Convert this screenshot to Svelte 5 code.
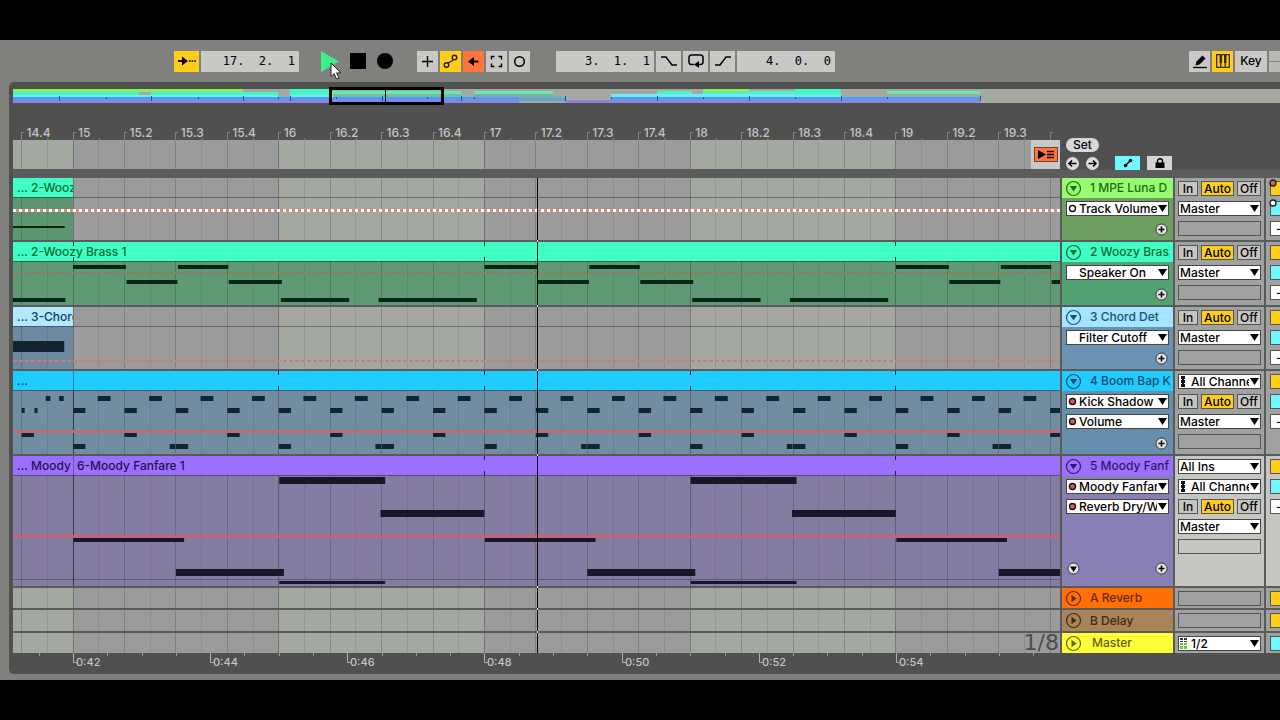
<script>
  const BEAT = 51.43;
  const ORIGIN = 60; // x of bar 15 inside a lane

  const at = (beat) => ORIGIN + beat * BEAT;

  const beats = Array.from({ length: 40 }, (_, i) => i - 1);
  const bars = Array.from({ length: 6 }, (_, i) => i * 2 - 1);

  function barLabel(beat) {
    const bar = 15 + Math.floor(beat / 4);
    const sub = (((beat % 4) + 4) % 4) + 1;
    return sub === 1 ? `${bar}` : `${bar}.${sub}`;
  }

  // [start, end, y, height], start and end in beats from bar 15
  function loop(pattern, length, from, to) {
    const out = [];
    for (let k = from; k < to; k++) {
      for (const [a, b, y, h] of pattern) out.push([a + k * length, b + k * length, y, h]);
    }
    return out;
  }

  const brass = loop(
    [
      [0, 1.03, 23, 4],
      [1.04, 2.03, 38, 4],
      [2.04, 3.02, 23, 4],
      [3.03, 4.06, 38, 4],
      [4.04, 5.37, 56, 4],
      [5.94, 7.85, 56, 4],
    ],
    8, -1, 4
  );

  const drums = [
    [-0.53, -0.44, 25, 5],
    [-0.27, -0.18, 25, 5],
    [-1, -0.94, 37, 5],
    [-0.75, -0.69, 37, 5],
    [-1, -0.76, 62, 4],
    ...loop([[0.48, 0.73, 25, 5], [0, 0.24, 37, 5]], 1, 0, 30),
    ...loop([[1, 1.24, 62, 4]], 2, 0, 15),
    ...loop([[0, 0.24, 73, 5], [1.88, 1.99, 73, 5], [2, 2.24, 73, 5]], 4, 0, 8),
  ];

  const fanfare = loop(
    [
      [0.01, 2.16, 82, 4],
      [2, 4.1, 113, 7],
      [4.01, 6.07, 21, 7],
      [4.01, 6.07, 125, 3],
      [5.98, 8, 54, 7],
    ],
    8, 0, 4
  );

  const tracks = [
    {
      id: "luna", num: 1, name: "MPE Luna D", height: 62,
      head: "#97fd70", body: "#6d9f60", ink: "#1d6a18",
      params: [{ name: "Track Volume", dot: "open" }],
      clips: [{ from: -2, to: 0, title: "... 2-Woozy Brass 1", head: "#40ffc5", body: "#5c9771", ink: "#0c6b35" }],
      notes: [[-2, -0.16, 48, 2]],
      line: { y: 32.5, width: 3, color: "#df8880", dots: true },
      marks: [], inputs: [],
    },
    {
      id: "woozy", num: 2, name: "Woozy Bras", height: 63,
      head: "#40ffc5", body: "#53a273", ink: "#0c6b35",
      params: [{ name: "Speaker On", dot: "" }],
      clips: [{ from: -2, to: 24, title: "... 2-Woozy Brass 1", head: "#40ffc5", body: "#5f9a74", ink: "#0c6b35" }],
      notes: brass,
      line: { y: 31, width: 2, color: "#96785f", dash: "4 2" },
      marks: [0, 8, 16], inputs: [],
    },
    {
      id: "chord", num: 3, name: "Chord Det", height: 62,
      head: "#a4e5ff", body: "#6b91b3", ink: "#16527f",
      params: [{ name: "Filter Cutoff", dot: "" }],
      clips: [{ from: -2, to: 0, title: "... 3-Chord Detune", head: "#b2e9ff", body: "#7089a3", ink: "#103e66" }],
      notes: [[-2, -0.17, 34, 11]],
      line: { y: 54, width: 2, color: "#cc7b77", dash: "4 2" },
      marks: [], inputs: [],
    },
    {
      id: "boom", num: 4, name: "Boom Bap K", height: 83,
      head: "#20ccff", body: "#668fae", ink: "#0d4d75",
      params: [{ name: "Kick Shadow", dot: "on" }, { name: "Volume", dot: "on" }],
      clips: [
        { from: -2, to: 0, title: "...", head: "#20ccff", body: "#718da2", ink: "#0d4d75" },
        { from: 0, to: 24, title: "", head: "#20ccff", body: "#718da2", ink: "#0d4d75" },
      ],
      notes: drums,
      line: { y: 60.5, width: 3, color: "#bb6c77" },
      marks: [4, 8, 12, 16], inputs: ["channels"],
    },
    {
      id: "moody", num: 5, name: "Moody Fanf", height: 130,
      head: "#9b70ff", body: "#8a7fb5", ink: "#351768",
      params: [{ name: "Moody Fanfare", dot: "on" }, { name: "Reverb Dry/Wet", dot: "on" }],
      clips: [
        { from: -2, to: 0, title: "... Moody", head: "#9b70ff", body: "#857ca2", ink: "#22104e" },
        { from: 0, to: 24, title: "6-Moody Fanfare 1", head: "#9b70ff", body: "#857ca2", ink: "#22104e" },
      ],
      notes: fanfare,
      line: { y: 80.5, width: 3, color: "#c46478" },
      marks: [8, 16], inputs: ["ins", "channels"], tall: true,
    },
  ];

  const returns = [
    { name: "A Reverb", height: 20, head: "#ff7108", ink: "#6e2605" },
    { name: "B Delay", height: 21, head: "#a98359", ink: "#45280d" },
    { name: "Master", height: 20, head: "#ffff3a", ink: "#62620c", master: true },
  ];

  const Y = "#8aee58", M = "#46f7c0", C = "#78e6fb", B = "#4b9df5", P = "#8f83df";
  // [x1, x2, y, height, colour]
  const overview = [
    [0, 230, 0, 3, Y], [0, 126, 3, 3, M], [138, 265, 3, 3, M], [0, 265, 6, 3, C],
    [0, 506, 8, 3, B], [0, 506, 11, 3, P],
    [277, 320, 0, 7, M], [277, 320, 6, 2, C], [320, 448, 2, 3, "#63eab0"], [320, 448, 5, 3, "#7db9a4"],
    [461, 540, 2, 3, "#63eab0"], [461, 540, 5, 3, "#84aaa5"],
    [506, 552, 8, 4, "#62a6cc"], [552, 598, 11, 3, P],
    [598, 967, 8, 3, B], [598, 967, 11, 3, P], [598, 828, 5, 3, C],
    [644, 679, 2, 3, M], [690, 736, 2, 3, M], [690, 736, 0, 3, Y], [736, 782, 2, 3, M],
    [782, 828, 0, 6, M], [874, 967, 2, 3, "#63eab0"],
  ];
  const overviewTicks = [46, 93, 138, 185, 230, 265, 277, 323, 369, 414, 448, 461, 552, 598, 644, 690, 736, 782, 828, 874, 967];
</script>

{#snippet grid()}
  <rect width="100%" height="100%" fill="#9b9b9b" />
  {#each bars as bar}
    <rect x={at(bar * 4)} width={BEAT * 4} height="100%" fill="#a3a8a1" />
  {/each}
{/snippet}

{#snippet lines()}
  {#each beats as beat}
    <rect x={Math.round(at(beat) - 0.4)} width="1" height="100%" fill="#000" opacity={beat % 4 === 0 ? 0.26 : 0.18} />
    <rect x={Math.round(at(beat + 0.5) - 0.4)} width="1" height="100%" fill="#000" opacity="0.09" />
  {/each}
{/snippet}

{#snippet fold(open)}
  <svg class="fold" width="17" height="17" viewBox="0 0 17 17">
    <circle cx="8.5" cy="8.5" r="7" fill="none" stroke="currentColor" stroke-width="1.2" />
    {#if open}
      <path d="M4.8 6h7.4L8.5 11.5z" fill="currentColor" />
    {:else}
      <path d="M6.5 4.8v7.4L11.5 8.5z" fill="currentColor" />
    {/if}
  </svg>
{/snippet}

{#snippet picker(label, value, icon)}
  <label class="picker">
    {#if icon === "open" || icon === "on"}
      <svg class="lead" width="9" height="15" viewBox="0 0 9 15">
        <circle cx="4.5" cy="7.5" r="3" fill={icon === "on" ? "#e2595b" : "#fff"} stroke="#111" stroke-width="1.4" />
      </svg>
    {:else if icon === "midi"}
      <svg class="lead" width="6" height="15" viewBox="0 0 6 15">
        <path d="M1 2h4v3H1zM1 6h4v3H1zM1 10h4v3H1zM2 2h2v10H2z" fill="#111" />
      </svg>
    {:else if icon === "audio"}
      <svg class="lead" width="8" height="15" viewBox="0 0 8 15">
        <path d="M0 2h3v2H0zM4 2h3v2H4zM0 5h3v1H0zM4 5h3v1H4z" fill="#333" />
        <path d="M0 7h3v2H0zM4 7h3v2H4zM0 10h3v3H0zM4 10h3v3H4z" fill="#63cf3c" />
      </svg>
    {/if}
    <select class:indent={icon !== undefined} aria-label={label}>
      <option>{value}</option>
    </select>
    <svg class="caret" width="11" height="11" viewBox="0 0 11 11">
      <path d="M1 2h9L5.5 9z" fill="#000" />
    </svg>
  </label>
{/snippet}

{#snippet plus()}
  <button class="round" aria-label="Add automation lane">
    <svg width="13" height="13" viewBox="0 0 13 13">
      <circle cx="6.5" cy="6.5" r="5.5" fill="#e4e4e4" stroke="#333" />
      <path d="M6.5 3.5v6M3.5 6.5h6" stroke="#000" stroke-width="1.6" />
    </svg>
  </button>
{/snippet}

<main class="app">
  <header class="toolbar">
    <div class="group">
      <button class="tool on wide" aria-label="Follow">
        <svg width="19" height="12" viewBox="0 0 19 12">
          <path d="M1 6h6" stroke="#000" stroke-width="1.8" />
          <path d="M5 1.5L11 6l-6 4.5z" />
          <path d="M12 6h7" stroke="#000" stroke-width="1.6" stroke-dasharray="1.6 1" />
        </svg>
      </button>
      <input class="field" aria-label="Song position" value="17.  2.  1" />
    </div>

    <div class="transport">
      <button class="play" aria-label="Play">
        <svg width="18" height="21" viewBox="0 0 18 21"><path d="M0 0v21L18 10.5z" fill="#3fee8c" /></svg>
        <svg class="cursor" width="12" height="18" viewBox="0 0 12 18">
          <path d="M1 1v13.500l3.200-2.800L6.500 17l2.400-1-2.300-5.100H11z" fill="#fff" stroke="#222" />
        </svg>
      </button>
      <button aria-label="Stop"><svg width="16" height="16"><rect width="16" height="16" /></svg></button>
      <button aria-label="Record"><svg width="16" height="16"><circle cx="8" cy="8" r="8" /></svg></button>
    </div>

    <div class="group modes">
      <button class="tool" aria-label="Overdub">
        <svg width="13" height="13" viewBox="0 0 13 13"><path d="M6.5 1v11M1 6.5h11" stroke="#000" stroke-width="1.4" /></svg>
      </button>
      <button class="tool on" aria-label="Automation arm">
        <svg width="15" height="15" viewBox="0 0 15 15" fill="none" stroke="#2a2000" stroke-width="1.4">
          <circle cx="3.5" cy="11" r="2.3" /><circle cx="11.500" cy="3.5" r="2.3" />
          <path d="M5 9.300C6.500 6.500 9 9.500 10 5.200" />
        </svg>
      </button>
      <button class="tool hot" aria-label="Re-enable automation">
        <svg width="11" height="11" viewBox="0 0 11 11"><path d="M0 5.500L6 1v3.500h4.500v2H6V10z" /></svg>
      </button>
      <button class="tool" aria-label="Capture">
        <svg width="13" height="13" viewBox="0 0 13 13" fill="none" stroke="#000" stroke-width="1.4">
          <path d="M1.500 4.500v-3h3M8.500 1.500h3v3M11.500 8.500v3h-3M4.500 11.500h-3v-3" />
        </svg>
      </button>
      <button class="tool" aria-label="Session record">
        <svg width="13" height="13" viewBox="0 0 13 13"><circle cx="6.5" cy="6.5" r="4.8" fill="none" stroke="#000" stroke-width="1.5" /></svg>
      </button>
    </div>

    <div class="group loop">
      <input class="field" aria-label="Loop start" value="3.  1.  1" />
      <button class="tool wide" aria-label="Punch in">
        <svg width="16" height="12" viewBox="0 0 16 12" fill="none" stroke="#000" stroke-width="1.5"><path d="M0 2h5l6 8h5" /></svg>
      </button>
      <button class="tool wide" aria-label="Loop">
        <svg width="18" height="16" viewBox="0 0 18 16">
          <path d="M7 11.500H4.500A2.500 2.500 0 0 1 2 9V4.500A2.500 2.500 0 0 1 4.500 2h9A2.500 2.500 0 0 1 16 4.500V9a2.500 2.500 0 0 1-2.500 2.500H12" fill="none" stroke="#000" stroke-width="1.5" />
          <path d="M12 8v7l-5-3.500z" />
        </svg>
      </button>
      <button class="tool wide" aria-label="Punch out">
        <svg width="16" height="12" viewBox="0 0 16 12" fill="none" stroke="#000" stroke-width="1.5"><path d="M0 10h5l6-8h5" /></svg>
      </button>
      <input class="field" aria-label="Loop length" value="4.  0.  0" />
    </div>

    <div class="group right">
      <button class="tool" aria-label="Draw mode">
        <svg width="14" height="15" viewBox="0 0 14 15">
          <path d="M2.500 11.500L3.500 7.500 9.500 1.500l3 3-6 6z" /><path d="M0 13.500h14" stroke="#000" stroke-width="1.3" />
        </svg>
      </button>
      <button class="tool on" aria-label="Computer MIDI keyboard">
        <svg width="14" height="14" viewBox="0 0 14 14">
          <path d="M.7.700h12.600v12.600H.7zM4.800 8v5M9.200 8v5" fill="none" stroke="#3a2a00" stroke-width="1.3" />
          <path d="M3.600 1h2.500v8H3.600zM8 1h2.500v8H8z" fill="#3a2a00" />
        </svg>
      </button>
      <button class="tool key">Key</button>
      <span class="stack"><i></i><i></i></span>
    </div>
  </header>

  <section class="panel">
    <div class="overview">
      <svg width="100%" height="14">
        {#each overview as [x1, x2, y, h, fill]}
          <rect x={x1} {y} width={x2 - x1} height={h} {fill} />
        {/each}
        {#each overviewTicks as x, i}
          <rect {x} y={i % 2 ? 8 : 7} width="1" height={i % 2 ? 2 : 5} fill="#1c4fa0" />
        {/each}
      </svg>
      <div class="window"></div>
    </div>

    <div class="row top">
      <div class="rulers">
        <svg class="ruler" width="100%" height="37">
          {#each beats as beat}
            <path d="M{Math.round(at(beat) - 0.4) + 3} 29.500h-2.500v7.500" fill="none" stroke="#858585" />
            <rect x={at(beat + 0.5)} y="35" width="1" height="2" fill="#858585" />
            {#if beat < 19}
              <text x={at(beat) + 5} y="34">{barLabel(beat)}</text>
            {/if}
          {/each}
        </svg>
        <div class="scrub">
          <svg width="100%" height="29">{@render grid()}{@render lines()}</svg>
          <div class="arranger">
            <button aria-label="Back to arrangement">
              <svg width="18" height="11" viewBox="0 0 18 11">
                <path d="M1 1l8 4.500L1 10z" /><path d="M10 2.500h7M10 5.500h7M10 8.500h7" stroke="#000" stroke-width="1.3" />
              </svg>
            </button>
          </div>
        </div>
      </div>

      <div class="locators">
        <button class="set">Set</button>
        <div class="locator-row">
          <button class="round" aria-label="Previous locator">
            <svg width="13" height="13" viewBox="0 0 13 13"><circle cx="6.5" cy="6.5" r="6.5" fill="#dcdcdc" /><path d="M10.500 6.500H4M6 3.500l-3 3 3 3" fill="none" stroke="#000" stroke-width="1.6" /></svg>
          </button>
          <button class="round" aria-label="Next locator">
            <svg width="13" height="13" viewBox="0 0 13 13"><circle cx="6.5" cy="6.5" r="6.5" fill="#dcdcdc" /><path d="M2.500 6.500H9M7 3.500l3 3-3 3" fill="none" stroke="#000" stroke-width="1.6" /></svg>
          </button>
          <button class="flat cyan" aria-label="Automation mode">
            <svg width="10" height="10" viewBox="0 0 10 10"><path d="M2 8l6-6" stroke="#000" stroke-width="1.4" /><circle cx="2.500" cy="7.500" r="1.800" /><circle cx="7.500" cy="2.500" r="1.800" /></svg>
          </button>
          <button class="flat" aria-label="Lock envelopes">
            <svg width="10" height="10" viewBox="0 0 10 10"><path d="M.5 4.500h9V10h-9z" /><path d="M2.500 5V3a2.500 2.200 0 0 1 5 0v2" fill="none" stroke="#000" stroke-width="1.4" /></svg>
          </button>
        </div>
      </div>
    </div>

    <div class="tracks">
      {#each tracks as track (track.id)}
        <div class="row" style="height: {track.height}px">
          <div class="lane">
            <svg class="canvas" width="100%" height="100%">
              {@render grid()}
              {#each track.clips as clip}
                <rect x={at(clip.from)} y="0" width={(clip.to - clip.from) * BEAT} height="100%" fill={clip.body} />
              {/each}
              {@render lines()}
              {#each track.clips as clip}
                <rect x={at(clip.from)} width={(clip.to - clip.from) * BEAT} height="19" fill={clip.head} />
                {#if track.clips.length > 1}
                  <rect x={ORIGIN} width="1" height="100%" fill="#222" opacity="0.4" />
                {/if}
              {/each}
              <rect y="19" width="100%" height="1" fill="#000" opacity="0.35" />
              {#if track.tall}
                <rect y="123" width="100%" height="1" fill="#000" opacity="0.25" />
              {/if}
              {#each track.marks as beat}
                <rect x={Math.round(at(beat) - 0.4)} width="1" height="4" fill="#0a3030" />
                <rect x={Math.round(at(beat) - 0.4)} y="15" width="1" height="4" fill="#0a3030" />
              {/each}
              {#each track.notes as [a, b, y, h]}
                <rect x={at(a)} {y} width={(b - a) * BEAT} height={h} class="note {track.id}" />
              {/each}
              <line x1="0" x2="100%" y1={track.line.y} y2={track.line.y} stroke={track.line.color} stroke-width={track.line.width} stroke-dasharray={track.line.dash} />
              {#if track.line.dots}
                <line x1="0" x2="100%" y1={track.line.y} y2={track.line.y} stroke="#fff" stroke-width="3" stroke-dasharray="3 3" />
              {/if}
            </svg>
            {#each track.clips as clip}
              <span
                class="clip-title"
                style="left: {Math.max(0, at(clip.from))}px; width: {at(clip.to) - Math.max(0, at(clip.from))}px; color: {clip.ink}"
              >{clip.title}</span>
            {/each}
          </div>

          <div class="track-head" style="background: {track.body}">
            <div class="track-title" style="background: {track.head}; color: {track.ink}">
              {@render fold(true)}
              <span>{track.num} {track.name}</span>
            </div>
            {#each track.params as param}
              {@render picker("Automation parameter", param.name, param.dot)}
            {/each}
            <div class="track-foot" class:tall={track.tall}>
              {#if track.tall}
                <button class="round" aria-label="Show lanes">
                  <svg width="13" height="13" viewBox="0 0 13 13">
                    <circle cx="6.5" cy="6.5" r="5.5" fill="#e4e4e4" stroke="#333" /><path d="M3 4.500h7L6.500 10z" />
                  </svg>
                </button>
              {/if}
              {@render plus()}
            </div>
          </div>

          <div class="io" class:tall={track.tall}>
            {#if track.inputs.includes("ins")}
              {@render picker("MIDI from", "All Ins")}
            {/if}
            {#if track.inputs.includes("channels")}
              {@render picker("Input channel", "All Channels", "midi")}
            {/if}
            <div class="monitor">
              <button>In</button>
              <button class="active">Auto</button>
              <button>Off</button>
            </div>
            {@render picker("Output", "Master")}
            <div class="slot"></div>
          </div>

          <div class="mix" class:tall={track.tall}>
            <i class="yellow"></i>
            <i class="cyan"></i>
            <i class="white">-</i>
            {#if track.id === "luna"}
              <svg class="knobs" width="8" height="30" viewBox="0 0 8 30">
                <circle cx="4" cy="5" r="3" fill="#e2595b" stroke="#222" stroke-width="1.4" />
                <circle cx="4" cy="25" r="3" fill="#fff" stroke="#222" stroke-width="1.4" />
              </svg>
            {/if}
          </div>
        </div>
      {/each}

      {#each returns as ret}
        <div class="row" style="height: {ret.height}px">
          <div class="lane">
            <svg class="canvas" width="100%" height="100%">{@render grid()}{@render lines()}</svg>
            {#if ret.master}
              <span class="grid-size">1/8</span>
            {/if}
          </div>
          <div class="track-head">
            <div class="track-title" style="background: {ret.head}; color: {ret.ink}">
              {@render fold(false)}
              <span class:master={ret.master}>{ret.name}</span>
            </div>
          </div>
          <div class="io">
            {#if ret.master}
              {@render picker("Master output", "1/2", "audio")}
            {:else}
              <div class="slot"></div>
            {/if}
          </div>
          <div class="mix"><i class={ret.master ? "cyan" : "yellow"}></i></div>
        </div>
      {/each}

      <svg class="playhead" width="1" height="475">
        <rect width="1" height="475" />
        {#each [62, 127, 191, 276, 408, 430, 453] as y}
          <rect {y} width="1" height="2" fill="#fff" />
        {/each}
      </svg>
    </div>

    <svg class="times" width="100%" height="21">
      {#each Array.from({ length: 30 }, (_, i) => i - 1) as i}
        {@const x = Math.round(ORIGIN + i * 34.29)}
        {#if i % 4 === 0 && i < 28}
          <path d="M{x + 0.5} 0v9.500h3" fill="none" stroke="#b0b0b0" />
          <text x={x + 3} y="13">0:{42 + i / 2}</text>
        {:else}
          <rect {x} width="1" height="3" fill="#a0a0a0" />
        {/if}
      {/each}
    </svg>
  </section>
</main>

<style>
  :global(body) {
    margin: 0;
    background: #000;
  }

  .app {
    margin: 40px 0;
    padding-bottom: 6px;
    background: #80817c;
    font-family: Inter, "Liberation Sans", sans-serif;
    font-size: 12px;
    font-weight: 500;
    line-height: 14px;
    overflow: hidden;
  }

  svg {
    display: block;
    flex-shrink: 0;
  }

  button,
  input,
  select {
    box-sizing: border-box;
    margin: 0;
    border: 0;
    border-radius: 0;
    padding: 0;
    font: inherit;
    color: #000;
  }

  /* Toolbar */
  .toolbar {
    display: flex;
    align-items: center;
    height: 42px;
    padding-left: 174px;
    position: relative;
  }

  .group {
    display: flex;
    gap: 2px;
  }

  .tool {
    display: flex;
    align-items: center;
    justify-content: center;
    width: 21px;
    height: 21px;
    background: #c8c8c4;
  }

  .tool.wide {
    width: 25px;
  }

  .tool.on {
    background: #ffcd1a;
  }

  .tool.hot {
    background: #ff7438;
  }

  .tool.key {
    width: 32px;
  }

  .field {
    width: 98px;
    height: 21px;
    padding-right: 4px;
    background: #c8c8c4;
    font: 12px "DejaVu Sans Mono", monospace;
    text-align: right;
    white-space: pre;
  }

  .transport {
    display: flex;
    align-items: center;
    gap: 11px;
    margin: 0 24px 0 22px;
  }

  .transport button {
    background: none;
  }

  .play {
    position: relative;
  }

  .cursor {
    position: absolute;
    left: 9px;
    top: 11px;
    z-index: 2;
  }

  .modes {
    margin-right: 26px;
  }

  .right {
    margin-left: auto;
  }

  .stack {
    display: flex;
    flex-direction: column;
    gap: 1px;
    width: 11px;
  }

  .stack i {
    flex: 1;
    background: #b9bab4;
  }

  /* Arrangement */
  .panel {
    margin-left: 9px;
    padding: 7px 0 0 4px;
    background: #505050;
    border-radius: 5px 0 0 5px;
  }

  .overview {
    position: relative;
    height: 14px;
    background: #a3a8a1;
  }

  .window {
    position: absolute;
    left: 316px;
    top: -2px;
    box-sizing: border-box;
    width: 115px;
    height: 18px;
    border: 3px solid #000;
    background: linear-gradient(#000, #000) 53px 0 / 1px 100% no-repeat;
  }

  .row {
    display: grid;
    grid-template-columns: minmax(0, 1fr) 111px 89px 14px;
    column-gap: 2px;
  }

  .top {
    padding-bottom: 9px;
    background: linear-gradient(#505050 66px, #5c5c5c 66px);
  }

  .ruler text {
    fill: #c4c4c4;
  }

  .scrub {
    position: relative;
  }

  .arranger {
    position: absolute;
    right: 0;
    top: 0;
    display: flex;
    align-items: center;
    justify-content: center;
    width: 29px;
    height: 29px;
    background: #c8c8c8;
  }

  .arranger button {
    padding: 1px 2px;
    border: 1px solid #6b4030;
    background: #ff7438;
  }

  .locators {
    display: flex;
    flex-direction: column;
    align-items: flex-start;
    justify-content: flex-end;
    gap: 4px;
    margin-bottom: -1px;
    padding: 0 0 0 4px;
    background: #505050;
    grid-column: 2 / -1;
  }

  .set {
    width: 33px;
    height: 14px;
    border-radius: 7px;
    background: #d8d8d8;
  }

  .locator-row {
    display: flex;
    gap: 7px;
    align-items: center;
  }

  .round {
    background: none;
  }

  .flat {
    display: flex;
    align-items: center;
    justify-content: center;
    width: 25px;
    height: 14px;
    background: #d4d4d4;
  }

  .flat.cyan {
    margin-left: 9px;
    background: #70f7ff;
  }

  /* Tracks */
  .tracks {
    position: relative;
    display: grid;
    row-gap: 2px;
    background: #5a5a5a;
  }

  .lane {
    position: relative;
    overflow: hidden;
  }

  .canvas {
    position: absolute;
    inset: 0;
  }

  .note {
    fill: #0a2515;
  }

  .note.chord,
  .note.boom {
    fill: #13242e;
  }

  .note.moody {
    fill: #1b1529;
  }

  .clip-title {
    position: absolute;
    top: 0;
    box-sizing: border-box;
    padding-left: 4px;
    line-height: 20px;
    overflow: hidden;
    white-space: nowrap;
  }

  .grid-size {
    position: absolute;
    right: 1px;
    top: 0;
    font: 22px "DejaVu Sans", sans-serif;
    line-height: 20px;
    color: #4c4c4c;
  }

  .playhead {
    position: absolute;
    left: 524px;
    top: 0;
  }

  .track-head {
    display: flex;
    flex-direction: column;
    gap: 5px;
    overflow: hidden;
  }

  .track-title {
    display: flex;
    align-items: center;
    gap: 8px;
    flex: 0 0 20px;
    margin-bottom: -2px;
    padding-left: 3px;
    white-space: nowrap;
    overflow: hidden;
  }

  .track-title:only-child {
    flex: 1;
    margin-bottom: 0;
  }

  .master {
    padding-left: 2px;
  }

  .track-head .picker {
    margin: 0 4px;
  }

  .picker {
    position: relative;
    display: flex;
    height: 15px;
    flex-shrink: 0;
  }

  .picker select {
    appearance: none;
    width: 100%;
    height: 15px;
    padding: 0 10px 0 1px;
    border: 1px solid #444;
    background: #fff;
    line-height: 13px;
    overflow: hidden;
  }

  .picker .indent {
    padding-left: 12px;
  }

  .lead {
    position: absolute;
    left: 2px;
    top: 0;
  }

  .caret {
    position: absolute;
    right: 1px;
    top: 2px;
    background: #fff;
  }

  .track-foot {
    display: flex;
    justify-content: flex-end;
    margin-top: auto;
    padding: 0 5px 4px;
  }

  .track-foot.tall {
    justify-content: space-between;
    padding-bottom: 11px;
  }

  .io {
    display: flex;
    flex-direction: column;
    gap: 5px;
    padding: 3px 3px 0;
    background: #a0a29f;
  }

  .io.tall,
  .mix.tall {
    background: #c6c6c3;
  }

  .monitor {
    display: flex;
    justify-content: space-between;
  }

  .monitor button {
    width: 20px;
    height: 15px;
    border: 1px solid #555;
    background: #c4c6c2;
    line-height: 13px;
  }

  .monitor .active {
    width: 33px;
    background: #ffcd1a;
  }

  .monitor button:last-child {
    width: 24px;
  }

  .slot {
    height: 15px;
    box-sizing: border-box;
    border: 1px solid #555;
  }

  .mix {
    position: relative;
    display: flex;
    flex-direction: column;
    gap: 5px;
    padding: 3px 0 0 4px;
    background: #a0a29f;
    overflow: hidden;
  }

  .mix i {
    box-sizing: border-box;
    height: 15px;
    flex-shrink: 0;
    padding-left: 5px;
    border: 1px solid #555;
    border-right: 0;
    background: #ffcd1a;
    font-style: normal;
    line-height: 13px;
  }

  .mix .cyan {
    background: #70f7ff;
  }

  .mix .white {
    background: #fff;
  }

  .knobs {
    position: absolute;
    left: 3px;
    top: 0;
  }

  .times text {
    fill: #c4c4c4;
    font-size: 11px;
  }
</style>
